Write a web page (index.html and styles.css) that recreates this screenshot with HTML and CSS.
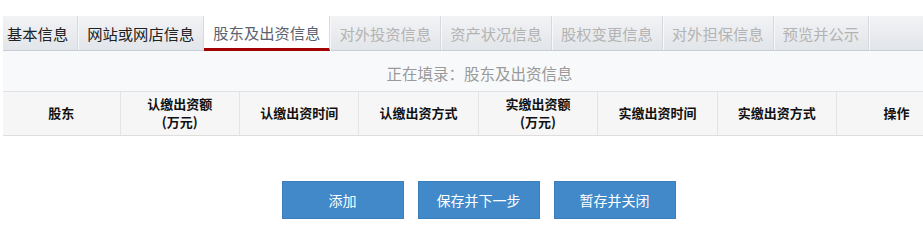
FILE: index.html
```html
<!DOCTYPE html>
<html lang="zh-CN">
<head>
    <meta charset="UTF-8">
    <title>股东及出资信息</title>
    <link rel="stylesheet" href="styles.css">
</head>
<body>
    <div class="page">
        <ul class="tabs">
            <li class="tab done">基本信息</li>
            <li class="tab done">网站或网店信息</li>
            <li class="tab active">股东及出资信息</li>
            <li class="tab">对外投资信息</li>
            <li class="tab">资产状况信息</li>
            <li class="tab">股权变更信息</li>
            <li class="tab">对外担保信息</li>
            <li class="tab">预览并公示</li>
        </ul>

        <div class="fill-title">正在填录：股东及出资信息</div>

        <table class="grid">
            <thead>
                <tr>
                    <th class="col-first">股东</th>
                    <th>认缴出资额<br>(万元)</th>
                    <th>认缴出资时间</th>
                    <th>认缴出资方式</th>
                    <th>实缴出资额<br>(万元)</th>
                    <th>实缴出资时间</th>
                    <th>实缴出资方式</th>
                    <th>操作</th>
                </tr>
            </thead>
            <tbody></tbody>
        </table>

        <div class="actions">
            <button class="btn">添加</button>
            <button class="btn">保存并下一步</button>
            <button class="btn">暂存并关闭</button>
        </div>
    </div>
</body>
</html>
```

FILE: styles.css
```css
* {
    margin: 0;
    padding: 0;
    box-sizing: border-box;
}

html, body {
    overflow: hidden;
}

body {
    font-family: "Noto Sans CJK SC", "Noto Sans", sans-serif;
    background: white;
    color: #222;
}

.page {
    width: 953px;
    margin: 16px 0 0 3px;
}

.tabs {
    list-style: none;
    display: flex;
    height: 35px;
    background: linear-gradient(#f2f3f5, #e2e5e9);
    border-bottom: 1px solid #c9ced6;
}

.tab {
    padding: 0 9px;
    font-size: 15.3px;
    line-height: 34px;
    color: #b3b3b3;
    border-right: 1px solid #d6d9de;
    box-shadow: 1px 0 0 #f8f9fa;
}

.tab:first-child {
    padding-left: 4px;
}

.tab.done {
    color: #222;
}

.tab.active {
    background: white;
    color: #5a6270;
    border-bottom: 3px solid #a30000;
    height: 35px;
    line-height: 32px;
}

.fill-title {
    background: #f8f9fb;
    height: 41px;
    line-height: 44px;
    text-align: center;
    font-size: 15.5px;
    color: #9a9a9a;
    border-bottom: 1px solid #dfe1e4;
}

.grid {
    width: 100%;
    border-collapse: collapse;
    table-layout: fixed;
}

.grid th {
    background: #f6f6f6;
    height: 43px;
    font-size: 13px;
    font-weight: bold;
    line-height: 18px;
    color: #111;
    border-right: 1px solid #e4e4e4;
    border-bottom: 1px solid #dedede;
}

.grid th.col-first {
    width: 117px;
}

.grid th:last-child {
    border-right: none;
}

.actions {
    display: flex;
    justify-content: center;
    gap: 14px;
    margin-top: 45px;
    padding-right: 2px;
}

.btn {
    width: 122px;
    height: 38px;
    background: #4189c9;
    border: 1px solid #3b7fbd;
    color: white;
    font-family: inherit;
    font-size: 14px;
    cursor: pointer;
}

.btn:hover {
    background: #3679b6;
}
```
